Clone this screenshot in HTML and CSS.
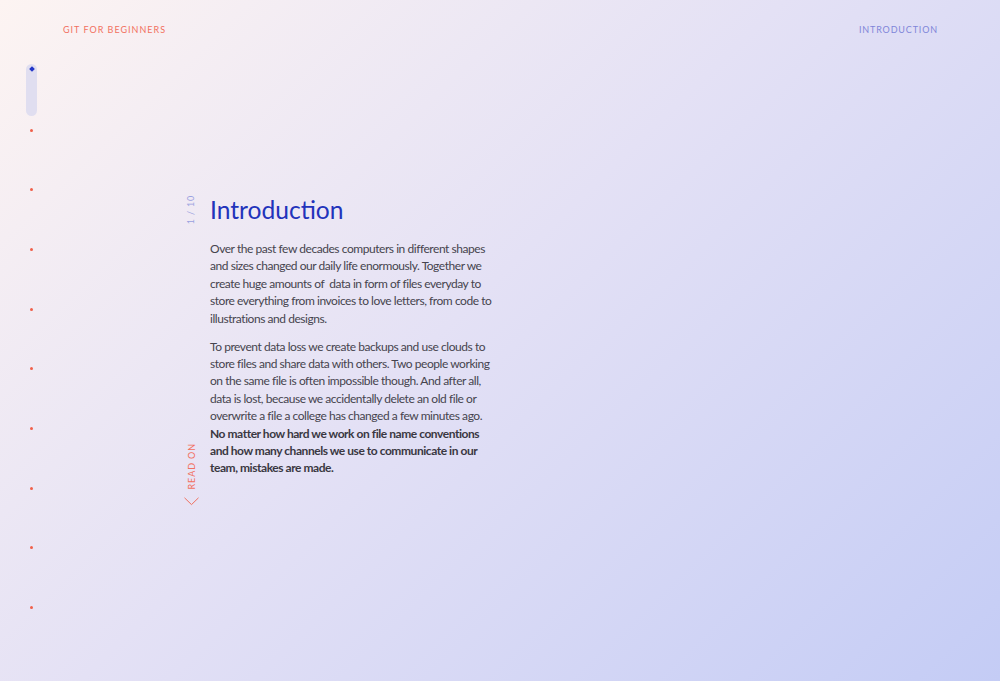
FILE: index.html
```html
<!DOCTYPE html>
<html lang="en">
<head>
<meta charset="utf-8">
<title>Git for Beginners – Introduction</title>
<link rel="stylesheet" href="styles.css">
</head>
<body>
<div class="page">
  <header class="topbar">
    <span class="brand">GIT FOR BEGINNERS</span>
    <span class="section-name">INTRODUCTION</span>
  </header>
  <div class="body-row">
    <nav class="rail">
      <div class="rail-pill"><span class="rail-current"></span></div>
      <span class="rail-dot"></span>
      <span class="rail-dot"></span>
      <span class="rail-dot"></span>
      <span class="rail-dot"></span>
      <span class="rail-dot"></span>
      <span class="rail-dot"></span>
      <span class="rail-dot"></span>
      <span class="rail-dot"></span>
      <span class="rail-dot"></span>
    </nav>
    <main class="chapter">
      <div class="side">
        <span class="counter">1 / 10</span>
        <div class="read-on">
          <span class="read-on-label">READ ON</span>
          <svg class="chevron" width="15" height="9" viewBox="0 0 15 9"><path d="M0.5 0.8 L7.5 7.6 L14.5 0.8" fill="none" stroke="#f0705f" stroke-width="1"/></svg>
        </div>
      </div>
      <article class="content">
        <h1 class="title">Introduction</h1>
        <p>Over the past few decades computers in different shapes<br>and sizes changed our daily life enormously. Together we<br>create huge amounts of &nbsp;data in form of files everyday to<br>store everything from invoices to love letters, from code to<br>illustrations and designs.</p>
        <p>To prevent data loss we create backups and use clouds to<br>store files and share data with others. Two people working<br>on the same file is often impossible though. And after all,<br>data is lost, because we accidentally delete an old file or<br>overwrite a file a college has changed a few minutes ago.<br><strong>No matter how hard we work on file name conventions<br>and how many channels we use to communicate in our<br>team, mistakes are made.</strong></p>
      </article>
    </main>
  </div>
</div>
</body>
</html>
```
FILE: styles.css
```css
html, body {
  margin: 0;
  padding: 0;
}
body {
  width: 1000px;
  height: 681px;
  overflow: hidden;
  background: linear-gradient(136deg, #fdf4f2 0%, #e4e1f5 46%, #c4ccf5 100%);
  font-family: "Lato", "Noto Sans", sans-serif;
}
.page {
  height: 681px;
  display: flex;
  flex-direction: column;
}
.topbar {
  display: flex;
  justify-content: space-between;
  align-items: center;
  height: 58px;
  padding: 0 63px;
  font-size: 9px;
}
.brand {
  color: #f2705f;
  letter-spacing: 1px;
}
.section-name {
  color: #7f86d9;
  letter-spacing: 0.85px;
  margin-right: -1px;
}
.body-row {
  display: flex;
  flex: 1;
}
.rail {
  width: 11px;
  margin-left: 26px;
  padding-top: 6px;
  display: flex;
  flex-direction: column;
  align-items: center;
}
.rail-pill {
  width: 11px;
  height: 52px;
  border-radius: 6px;
  background: #e0def0;
  display: flex;
  justify-content: center;
  padding-top: 3px;
  box-sizing: border-box;
}
.rail-current {
  width: 4px;
  height: 4px;
  background: #2235c8;
  transform: rotate(45deg);
}
.rail-dot {
  width: 3px;
  height: 3px;
  border-radius: 50%;
  background: #f0604a;
  margin-top: 56.7px;
}
.rail-pill + .rail-dot { margin-top: 12.5px; }
.chapter {
  display: flex;
  margin-left: 147px;
  padding-top: 137px;
}
.side {
  width: 26px;
  display: flex;
  flex-direction: column;
  align-items: flex-start;
}
.counter {
  writing-mode: vertical-rl;
  transform: rotate(180deg);
  font-size: 9px;
  letter-spacing: 0.8px;
  color: #9aa1df;
  margin-left: 1px;
  margin-top: 0;
}
.read-on {
  display: flex;
  flex-direction: column;
  align-items: center;
  width: 15px;
  margin-top: 219px;
}
.read-on-label {
  writing-mode: vertical-rl;
  transform: rotate(180deg);
  font-size: 9px;
  letter-spacing: 0.9px;
  color: #f2705f;
}
.chevron {
  margin-top: 7px;
}
.content {
  white-space: nowrap;
}
.title {
  margin: 0 0 15px;
  font-size: 24.6px;
  font-weight: 400;
  line-height: 30px;
  color: #2233bb;
}
.content p {
  margin: 0 0 10.5px;
  font-size: 12px;
  letter-spacing: -0.45px;
  line-height: 17.4px;
  color: #46444e;
}
.content strong {
  font-weight: 700;
  color: #3a3842;
}
```
